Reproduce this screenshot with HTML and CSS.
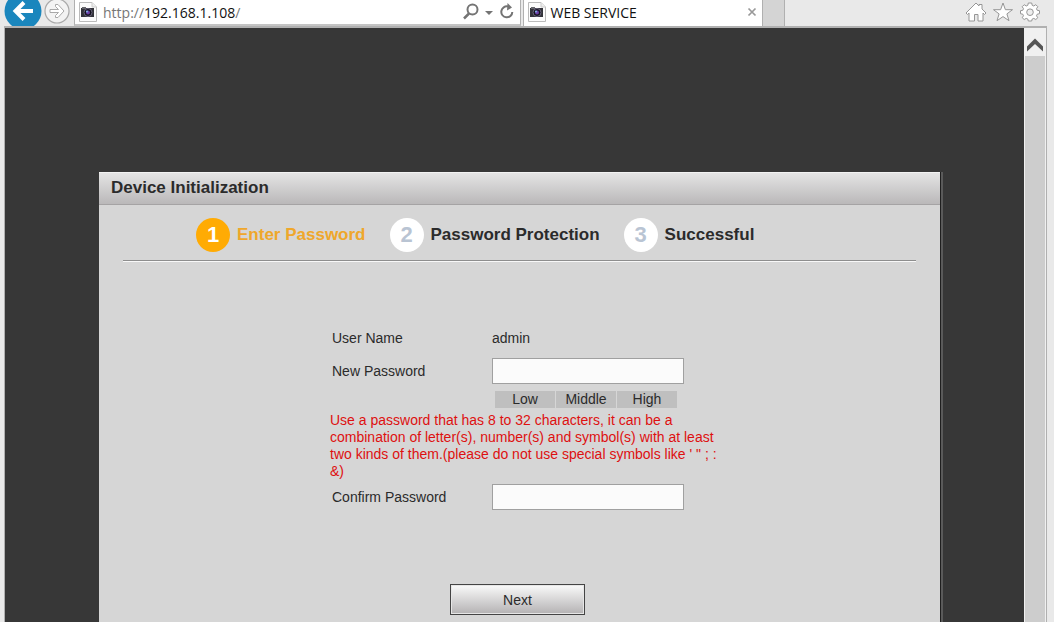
FILE: index.html
```html
<!DOCTYPE html>
<html lang="en">
  <head>
    <meta charset="UTF-8">
    <title>WEB SERVICE</title>
    <link rel="stylesheet" href="styles.css">
  </head>
  <body>
    <header class="toolbar">
      <button class="nav back" type="button" aria-label="Back">
        <svg width="38" height="38" viewBox="0 0 38 38">
          <circle cx="19" cy="19" r="18.500" fill="#1a86bd"/>
          <path d="M29 19H12M20 10.500L11.500 19L20 27.500" fill="none" stroke="#fff" stroke-width="4"/>
        </svg>
      </button>
      <button class="nav forward" type="button" aria-label="Forward">
        <svg width="26" height="26" viewBox="0 0 26 26">
          <circle cx="13" cy="13" r="12" fill="#f3f3f3" stroke="#a9a9a9" stroke-width="1.200"/>
          <path d="M6 11.500H14.500L11.500 8.500V6.500H14L20 13L14 19.500H11.500V17.500L14.500 14.500H6Z" fill="#fff" stroke="#a9a9a9"/>
        </svg>
      </button>
      <div class="address">
        <svg class="favicon" width="18" height="20" viewBox="0 0 18 20">
          <path d="M.5 .5H13L17.500 5V19.500H.5Z" fill="#fcfcfc" stroke="#bbb"/>
          <path d="M13 .5V5H17.500" fill="#eee" stroke="#ccc"/>
          <rect x="2" y="6" width="13" height="9" fill="#33333a"/>
          <rect x="3" y="5" width="4" height="2" fill="#66666c"/>
          <circle cx="9" cy="10.500" r="4" fill="#15131f" stroke="#6a647c"/>
          <circle cx="9" cy="10.500" r="2" fill="#6a3fa8"/>
          <circle cx="8" cy="9.500" r="1" fill="#7fb3e6"/>
        </svg>
        <span class="url"><span class="scheme">http://</span>192.168.1.108<span class="scheme">/</span></span>
        <button class="tool" type="button" aria-label="Search">
          <svg width="16" height="18" viewBox="0 0 16 18">
            <circle cx="9.500" cy="6.500" r="5" fill="none" stroke="#747474" stroke-width="2"/>
            <path d="M6 10.500L1 15.500" stroke="#747474" stroke-width="2.500"/>
          </svg>
        </button>
        <button class="tool" type="button" aria-label="Show address list">
          <svg width="8" height="18" viewBox="0 0 8 18"><path d="M0 8H8L4 12Z" fill="#747474"/></svg>
        </button>
        <button class="tool" type="button" aria-label="Refresh">
          <svg width="16" height="18" viewBox="0 0 16 18">
            <path d="M9 3.500A5.500 5.500 0 1 0 13.300 9" fill="none" stroke="#747474" stroke-width="2"/>
            <path d="M8.500 0L13 4.500L8 7.500Z" fill="#747474"/>
          </svg>
        </button>
      </div>
      <div class="tab">
        <svg class="favicon" width="18" height="20" viewBox="0 0 18 20">
          <path d="M.5 .5H13L17.500 5V19.500H.5Z" fill="#fcfcfc" stroke="#bbb"/>
          <path d="M13 .5V5H17.500" fill="#eee" stroke="#ccc"/>
          <rect x="2" y="6" width="13" height="9" fill="#33333a"/>
          <rect x="3" y="5" width="4" height="2" fill="#66666c"/>
          <circle cx="9" cy="10.500" r="4" fill="#15131f" stroke="#6a647c"/>
          <circle cx="9" cy="10.500" r="2" fill="#6a3fa8"/>
          <circle cx="8" cy="9.500" r="1" fill="#7fb3e6"/>
        </svg>
        <span class="tab-title">WEB SERVICE</span>
        <button class="tool" type="button" aria-label="Close tab">
          <svg width="10" height="10" viewBox="0 0 10 10"><path d="M1.500 1.500L8.500 8.500M8.500 1.500L1.500 8.500" stroke="#999" stroke-width="1.700"/></svg>
        </button>
      </div>
      <button class="new-tab" type="button" aria-label="New tab"></button>
      <div class="actions">
        <button class="tool" type="button" aria-label="Home">
          <svg width="22" height="20" viewBox="0 0 22 20">
            <path d="M11 1L14 4V2.500H17V7L21 11L19.500 12.500L18 11V19H13V12.500H9.500V19H4V11L2.500 12.500L1 11Z" fill="#fff" stroke="#969696"/>
          </svg>
        </button>
        <button class="tool" type="button" aria-label="Favorites">
          <svg width="22" height="20" viewBox="0 0 22 20">
            <path d="M11 1L13.400 7.700H20.500L14.900 11.900L17 18.700L11 14.600L5 18.700L7.100 11.900L1.500 7.700H8.600Z" fill="#fff" stroke="#969696"/>
          </svg>
        </button>
        <button class="tool" type="button" aria-label="Tools">
          <svg width="22" height="20" viewBox="0 0 22 20">
            <path d="M9.300 1H12.700L13.200 3.300L14.800 4L16.800 2.700L18.800 4.700L17.500 6.700L18.200 8.300L20.500 8.700V11.700L18.200 12.200L17.500 13.800L18.800 15.700L16.800 17.500L14.800 16.400L13.200 17L12.700 19H9.300L8.800 17L7.200 16.400L5.200 17.500L3.200 15.700L4.500 13.800L3.800 12.200L1.500 11.700V8.700L3.800 8.300L4.500 6.700L3.200 4.700L5.200 2.700L7.200 4L8.800 3.300Z" fill="#fff" stroke="#969696"/>
            <circle cx="11" cy="10.200" r="3.300" fill="#eee" stroke="#969696"/>
          </svg>
        </button>
      </div>
    </header>
    <div class="window">
      <main class="page">
        <section class="dialog">
          <h1 class="dialog-title">Device Initialization</h1>
          <ol class="steps">
            <li class="step active"><span class="number">1</span>Enter Password</li>
            <li class="step"><span class="number">2</span>Password Protection</li>
            <li class="step"><span class="number">3</span>Successful</li>
          </ol>
          <form class="form">
            <div class="row user">
              <span class="label">User Name</span>
              <span>admin</span>
            </div>
            <div class="row">
              <label class="label" for="new-password">New Password</label>
              <input class="field" id="new-password" type="password">
            </div>
            <div class="strength">
              <span class="level">Low</span>
              <span class="level">Middle</span>
              <span class="level">High</span>
            </div>
            <p class="hint">Use a password that has 8 to 32 characters, it can be a combination of letter(s), number(s) and symbol(s) with at least two kinds of them.(please do not use special symbols like ' " ; : &amp;)</p>
            <div class="row">
              <label class="label" for="confirm-password">Confirm Password</label>
              <input class="field" id="confirm-password" type="password">
            </div>
            <button class="next" type="button">Next</button>
          </form>
        </section>
      </main>
      <div class="scrollbar">
        <button class="scroll-up" type="button" aria-label="Scroll up">
          <svg width="18" height="14" viewBox="0 0 18 14"><path d="M1 8.500L9 .5L17 8.500V13.500L9 6L1 13.500Z" fill="#555"/></svg>
        </button>
        <div class="thumb"></div>
      </div>
    </div>
  </body>
</html>
```
FILE: styles.css
```css
* {
  box-sizing: border-box;
}
body {
  margin: 0;
  height: 100vh;
  display: flex;
  flex-direction: column;
  overflow: hidden;
  background: #e9e9e9;
  font-family: "Liberation Sans", Arial, sans-serif;
  font-size: 14px;
  color: #2b2b2b;
}
button {
  padding: 0;
  border: 0;
  background: none;
  font: inherit;
  color: inherit;
}
svg {
  display: block;
}

/* browser toolbar */
.toolbar {
  display: flex;
  align-items: center;
  height: 26px;
  padding-left: 4px;
  overflow: hidden;
  font-family: "Open Sans", "Noto Sans", sans-serif;
  color: #111;
}
.nav {
  flex: none;
  margin-bottom: 4px;
}
.forward {
  margin-left: 2px;
}
.address {
  flex: 436;
  display: flex;
  align-items: center;
  gap: 6px;
  height: 26px;
  margin-left: 4px;
  padding: 0 5px 0 4px;
  background: #fff;
  border-left: 1px solid #b0b0b0;
  border-right: 1px solid #b0b0b0;
  border-bottom: 2px solid #c4c4c4;
}
.favicon {
  flex: none;
}
.url {
  flex: 1;
}
.scheme {
  color: #777;
}
.tab {
  flex: 228;
  display: flex;
  align-items: center;
  gap: 4px;
  height: 26px;
  margin-left: 2px;
  padding: 0 5px 2px 4px;
  background: #fff;
  border-left: 1px solid #b0b0b0;
  border-right: 1px solid #b0b0b0;
}
.tab-title {
  flex: 1;
}
.new-tab {
  width: 22px;
  height: 26px;
  background: #d4d4d4;
  border-right: 1px solid #b0b0b0;
}
.actions {
  flex: 256;
  display: flex;
  justify-content: flex-end;
  gap: 5px;
  padding: 0 13px 3px 0;
}

/* page area */
.window {
  flex: 1;
  display: flex;
  min-height: 0;
  margin: 0 7px 0 4px;
  border: 1px solid #b0b0b0;
  border-top-width: 2px;
  border-bottom: 0;
}
.page {
  flex: 1;
  display: flex;
  padding: 144px 84px 0 94px;
  background: #373737;
}
.dialog {
  flex: 1;
  background: #d6d6d6;
  box-shadow: 1px 0 #1f1f1f, 3px 0 #5a5a5a;
}
.dialog-title {
  margin: 0;
  padding: 0 12px;
  height: 33px;
  line-height: 29px;
  font-size: 17px;
  border-top: 1px solid #f2f2f2;
  border-bottom: 1px solid #a5a3a4;
  background: linear-gradient(#e4e4e4, #bab8b9);
}
.steps {
  display: flex;
  gap: 24px;
  margin: 0 24px;
  padding: 13px 73px 8px;
  list-style: none;
  border-bottom: 1px solid #8e8e8e;
  box-shadow: 0 1px #f8f8f8;
  font-size: 17px;
  font-weight: bold;
}
.step {
  display: flex;
  align-items: center;
  gap: 7px;
}
.number {
  width: 34px;
  height: 34px;
  border-radius: 50%;
  background: #fff;
  color: #b9c4d3;
  font-size: 22px;
  line-height: 34px;
  text-align: center;
}
.active {
  color: #efa72b;
}
.active .number {
  background: #ffab04;
  color: #fff;
}

/* password form */
.form {
  display: flex;
  flex-direction: column;
  width: 402px;
  margin: 64px auto 0 231px;
}
.row {
  display: flex;
  align-items: center;
  padding-left: 2px;
}
.user {
  height: 26px;
  margin-bottom: 7px;
}
.label {
  width: 160px;
}
.field {
  width: 192px;
  height: 26px;
  padding: 0 4px;
  border: 1px solid #a0a0a0;
  background: #fbfbfb;
  font: inherit;
}
.strength {
  display: flex;
  gap: 1px;
  margin: 7px 0 4px 165px;
}
.level {
  width: 60px;
  line-height: 17px;
  text-align: center;
  background: #bfbfbf;
}
.hint {
  margin: 0 0 4px;
  line-height: 17px;
  color: #de1010;
}
.next {
  width: 135px;
  height: 31px;
  margin: 74px 0 0 120px;
  border: 1px solid #444;
  background: linear-gradient(#fafafa, #b4b2b3);
  box-shadow: inset 0 0 0 1px #e6e6e6;
}

/* scrollbar */
.scrollbar {
  display: flex;
  flex-direction: column;
  width: 22px;
  padding: 0 1px;
  background: #f0f0f0;
}
.scroll-up {
  display: flex;
  align-items: center;
  justify-content: center;
  height: 28px;
  padding-top: 6px;
}
.thumb {
  flex: 1;
  background: #cdcdcd;
}
```
